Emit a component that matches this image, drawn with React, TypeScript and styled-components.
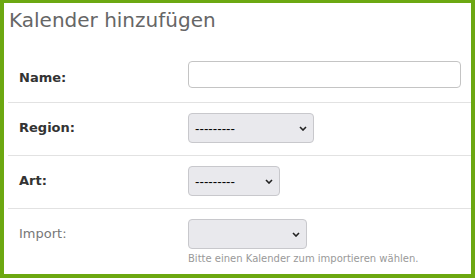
import React from "react";
import styled, { createGlobalStyle } from "styled-components";

const Global = createGlobalStyle`
  html, body { margin: 0; padding: 0; background: #fff; }
  body { font-family: "DejaVu Sans", Verdana, sans-serif; }
  * { box-sizing: border-box; }
`;

const Panel = styled.div`
  width: 475px;
  height: 278px;
  border-style: solid;
  border-color: #6ca811;
  border-width: 3px 4px 4px 4px;
  padding-left: 4px;
  background: #fff;
  overflow: hidden;
`;

const Title = styled.h1`
  margin: 6px 0 19px 1px;
  font-family: "DejaVu Sans", Verdana, sans-serif;
  font-weight: normal;
  font-size: 20px;
  line-height: 22px;
  color: #666;
`;

const Row = styled.div<{ $last?: boolean; $bottom?: number }>`
  display: grid;
  grid-template-columns: 180px 1fr;
  align-items: start;
  padding: 10px 0 ${(p) => (p.$last ? 0 : p.$bottom ?? 12)}px;
  border-bottom: ${(p) => (p.$last ? "none" : "1px solid #e2e2e2")};
`;

const Label = styled.label<{ $muted?: boolean; $lh?: number }>`
  padding-left: 11px;
  font-size: 13px;
  line-height: ${(p) => p.$lh ?? 30}px;
  font-weight: ${(p) => (p.$muted ? "normal" : "bold")};
  color: ${(p) => (p.$muted ? "#777" : "#333")};
`;

const Field = styled.div`
  display: flex;
  flex-direction: column;
  align-items: flex-start;
  padding-right: 10px;
`;

const TextInput = styled.input`
  width: 100%;
  height: 27px;
  margin-top: 1px;
  border: 1px solid #c4c4c4;
  border-radius: 4px;
  background: #fff;
  padding: 0 6px;
  font: 13px "DejaVu Sans", sans-serif;
`;

const SelectWrap = styled.div<{ $w: number }>`
  position: relative;
  width: ${(p) => p.$w}px;
  height: 30px;
`;

const Select = styled.select`
  appearance: none;
  -webkit-appearance: none;
  width: 100%;
  height: 30px;
  background: #e9e9ed;
  border: 1px solid #c8c8cc;
  border-radius: 4px;
  padding: 0 20px 0 6px;
  font: 13.33px "Liberation Sans", Arial, sans-serif;
  color: #000;
`;

const Chevron = styled.svg`
  position: absolute;
  right: 7px;
  top: 13px;
  width: 8px;
  height: 5px;
  pointer-events: none;
`;

const Help = styled.div`
  margin-top: 4px;
  font-size: 10px;
  line-height: 12px;
  color: #999;
`;

const Dropdown = ({ w, value }: { w: number; value?: string }) => (
  <SelectWrap $w={w}>
    <Select defaultValue={value ?? ""}>
      <option value={value ?? ""}>{value ?? ""}</option>
    </Select>
    <Chevron viewBox="0 0 8 5">
      <path d="M1 1 L4 4 L7 1" fill="none" stroke="#222" strokeWidth="1.6" />
    </Chevron>
  </SelectWrap>
);

export default function App() {
  return (
    <>
      <Global />
      <Panel>
        <Title>Kalender hinzufügen</Title>
        <Row $bottom={6}>
          <Label $lh={36}>Name:</Label>
          <Field>
            <TextInput type="text" />
          </Field>
        </Row>
        <Row>
          <Label>Region:</Label>
          <Field>
            <Dropdown w={126} value="---------" />
          </Field>
        </Row>
        <Row>
          <Label>Art:</Label>
          <Field>
            <Dropdown w={92} value="---------" />
          </Field>
        </Row>
        <Row $last>
          <Label $muted>Import:</Label>
          <Field>
            <Dropdown w={119} />
            <Help>Bitte einen Kalender zum importieren wählen.</Help>
          </Field>
        </Row>
      </Panel>
    </>
  );
}
